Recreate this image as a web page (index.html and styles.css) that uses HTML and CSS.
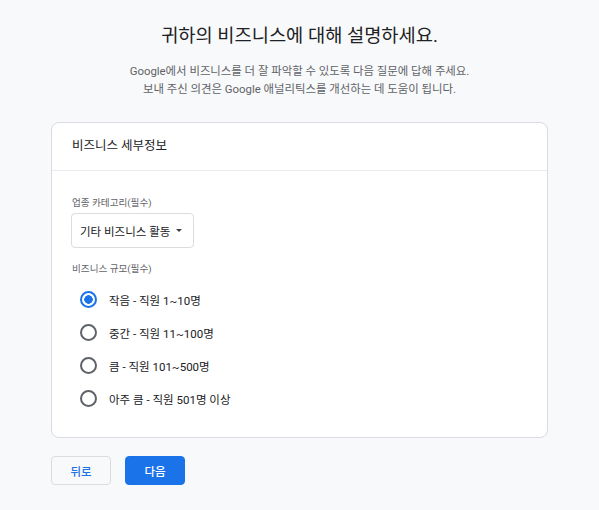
FILE: index.html
```html
<!DOCTYPE html>
<html lang="ko">
<head>
  <meta charset="UTF-8" />
  <meta name="viewport" content="width=device-width, initial-scale=1.0" />
  <title>비즈니스 정보</title>
  <link rel="stylesheet" href="styles.css">
</head>
<body>
  <main class="page">
    <h1 class="title">귀하의 비즈니스에 대해 설명하세요.</h1>
    <p class="intro">Google에서 비즈니스를 더 잘 파악할 수 있도록 다음 질문에 답해 주세요.<br>보내 주신 의견은 Google 애널리틱스를 개선하는 데 도움이 됩니다.</p>

    <section class="card">
      <div class="card-head">비즈니스 세부정보</div>
      <div class="card-body">
        <div class="field-label">업종 카테고리(필수)</div>
        <button class="select">기타 비즈니스 활동 <span class="caret"></span></button>

        <div class="field-label size-label">비즈니스 규모(필수)</div>
        <div class="radios">
          <label class="radio"><span class="dot checked"></span>작음 - 직원 1~10명</label>
          <label class="radio"><span class="dot"></span>중간 - 직원 11~100명</label>
          <label class="radio"><span class="dot"></span>큼 - 직원 101~500명</label>
          <label class="radio"><span class="dot"></span>아주 큼 - 직원 501명 이상</label>
        </div>
      </div>
    </section>

    <div class="actions">
      <button class="btn btn-back">뒤로</button>
      <button class="btn btn-next">다음</button>
    </div>
  </main>
</body>
</html>
```

FILE: styles.css
```css
body {
  margin: 0;
  background-color: #f8f9fa;
  color: #202124;
  font-family: Roboto, "Noto Sans CJK KR", sans-serif;
}
.page {
  width: 497px;
  margin: 0 auto;
  padding-top: 22px;
}
.title {
  margin: 0;
  text-align: center;
  font-size: 18.7px;
  font-weight: 400;
  line-height: 28px;
}
.intro {
  margin: 12px 0 0;
  text-align: center;
  font-size: 11.4px;
  line-height: 18px;
  color: #5f6368;
}
.card {
  margin-top: 24px;
  background-color: #fff;
  border: 1px solid #dadce0;
  border-radius: 8px;
}
.card-head {
  padding: 12px 20px 14px;
  font-size: 12.5px;
  line-height: 21px;
  border-bottom: 1px solid #e8eaed;
}
.card-body {
  padding: 25px 20px 22px;
}
.field-label {
  font-size: 9.6px;
  line-height: 14px;
  color: #5f6368;
}
.size-label {
  margin-top: 14px;
}
.select {
  display: flex;
  align-items: center;
  gap: 6px;
  margin: 3px 0 0 -1px;
  height: 35px;
  padding: 0 11px 0 8px;
  background-color: #fff;
  border: 1px solid #dadce0;
  border-radius: 4px;
  font-family: inherit;
  font-size: 11.5px;
  color: #202124;
}
.caret {
  width: 0;
  height: 0;
  border-left: 3.5px solid transparent;
  border-right: 3.5px solid transparent;
  border-top: 3.5px solid #3c4043;
}
.radios {
  margin-top: 7px;
}
.radio {
  display: flex;
  align-items: center;
  gap: 12px;
  height: 33px;
  padding-left: 8px;
  font-size: 11.5px;
}
.dot {
  box-sizing: border-box;
  width: 17px;
  height: 17px;
  border: 2px solid #5f6368;
  border-radius: 50%;
}
.dot.checked {
  border-color: #1a73e8;
  background: radial-gradient(circle, #1a73e8 0 4px, #fff 4.5px);
}
.actions {
  display: flex;
  gap: 14px;
  margin-top: 18px;
}
.btn {
  width: 60px;
  height: 29px;
  border-radius: 4px;
  font-family: inherit;
  font-size: 11.5px;
  font-weight: 500;
  cursor: pointer;
}
.btn-back {
  background-color: #f8f9fa;
  border: 1px solid #dadce0;
  color: #1a73e8;
}
.btn-next {
  background-color: #1a73e8;
  border: 1px solid #1a73e8;
  color: #fff;
}
```
